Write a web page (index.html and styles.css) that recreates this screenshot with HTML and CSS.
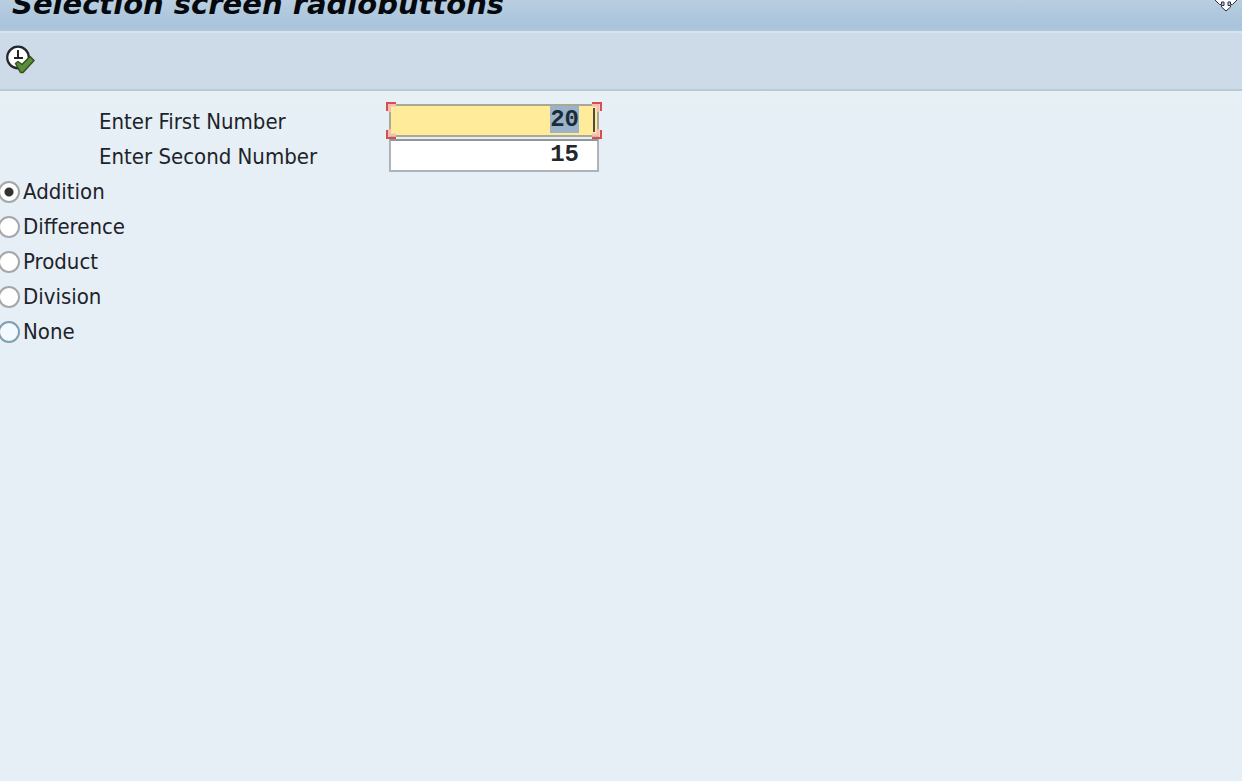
FILE: index.html
```html
<!DOCTYPE html>
<html lang="en">
<head>
<meta charset="utf-8">
<title>Selection screen radiobuttons</title>
<link rel="stylesheet" href="styles.css">
</head>
<body>
<header class="titlebar">
  <h1 class="title">Selection screen radiobuttons</h1>
  <svg class="move-cursor" width="24" height="24" viewBox="0 0 24 24" aria-hidden="true">
    <path d="M12 1 L16 5 V7 H14 V10 H17 V8 H19 L23 12 L18.500 16.500 H16.500 V14 H14 V17.500 H16.500 V19 L12 23 L7.500 19 V17.500 H10 V14 H7.500 V16.500 H5.500 L1 12 L5 8 H7 V10 H10 V7 H8 V5 Z" fill="#fff" stroke="#2c2c44" stroke-width="1"/>
  </svg>
</header>
<div class="toolbar">
  <button class="execute" type="button" aria-label="Execute">
    <svg width="30" height="30" viewBox="0 0 30 30" aria-hidden="true">
      <circle cx="13" cy="12.500" r="10.800" fill="#fff" stroke="#20262a" stroke-width="2.200"/>
      <path d="M13 5 V13.500 M9 13 H18" fill="none" stroke="#20262a" stroke-width="2"/>
      <path d="M10.500 18.500 L13 16.500 L17 19.500 L25 11.500 L29 15.500 L18 27.500 H15.500 Z" fill="#5c8c3e" stroke="#34511f" stroke-width="1.500" stroke-linejoin="round"/>
    </svg>
  </button>
</div>
<main class="screen">
  <form>
    <div class="row">
      <label class="label" for="first">Enter First Number</label>
      <div class="field focused">
        <input class="number" id="first" type="text" value="20">
        <span class="caret"></span>
        <svg class="marks" width="216" height="38" viewBox="0 0 216 38" aria-hidden="true">
          <g fill="none" stroke="#f8bcb8" stroke-width="3"><path d="M3.500 11 V4 H10 M206 4 H212 V11 M212 28 V34 H206 M10 34 H3.500 V28"/></g>
          <g fill="none" stroke="#d4504c" stroke-width="2"><path d="M1 10 V2 H10 M206 2 H215 V10 M215 29 V37 H206 M10 37 H1 V29"/></g>
        </svg>
      </div>
    </div>
    <div class="row">
      <label class="label" for="second">Enter Second Number</label>
      <div class="field"><input class="number" id="second" type="text" value="15"></div>
    </div>
    <div class="option"><input class="radio" type="radio" name="operation" id="addition" checked><label for="addition">Addition</label></div>
    <div class="option"><input class="radio" type="radio" name="operation" id="difference"><label for="difference">Difference</label></div>
    <div class="option"><input class="radio" type="radio" name="operation" id="product"><label for="product">Product</label></div>
    <div class="option"><input class="radio" type="radio" name="operation" id="division"><label for="division">Division</label></div>
    <div class="option"><input class="radio hot" type="radio" name="operation" id="none"><label for="none">None</label></div>
  </form>
</main>
<script src="script.js"></script>
</body>
</html>
```
FILE: styles.css
```css
* { box-sizing: border-box; }
body {
  margin: 0;
  min-height: 100vh;
  display: flex;
  flex-direction: column;
  background: #e7eff6;
  color: #1d2329;
  font-family: "DejaVu Sans Condensed", "Noto Sans", sans-serif;
  font-size: 22px;
}
.titlebar {
  position: relative;
  display: flex;
  align-items: flex-end;
  height: 31px;
  padding: 0 12px 10px;
  overflow: hidden;
  background: linear-gradient(#b9cfe0, #a9c3dc 80%, #aec7dc);
}
.title {
  margin: 0;
  color: #05090d;
  font: italic bold 29px/34px "DejaVu Sans", sans-serif;
  white-space: nowrap;
}
.move-cursor { position: absolute; top: -12px; right: 4px; }
.toolbar {
  display: flex;
  align-items: center;
  height: 60px;
  padding: 0 5px 2px;
  background: #ccdbe7;
  border-top: 2px solid #d8e5f0;
  border-bottom: 2px solid #b9c9d6;
}
.execute {
  display: flex;
  padding: 0;
  border: 0;
  background: none;
}
.screen {
  flex: 1;
  padding-top: 13px;
  background: linear-gradient(#e6f0f5, #e7eff6 60px, #e7eff6);
}
.row, .option {
  display: flex;
  align-items: center;
  height: 35px;
}
.row { padding-left: 99px; }
.label { width: 290px; }
.field {
  position: relative;
  align-self: flex-start;
  width: 210px;
  height: 33px;
}
.number {
  display: block;
  width: 100%;
  height: 100%;
  padding: 0 18px 2px 4px;
  border: 2px solid #b0b3b5;
  border-top-color: #909597;
  border-radius: 0;
  outline: 0;
  background: #fff;
  color: #25282a;
  font: bold 24px/26px "Liberation Mono", monospace;
  text-align: right;
  caret-color: transparent;
}
.number::selection { background: #9bb3c8; color: #1d2b38; }
.focused .number {
  background: #ffeb99;
  border-color: #a9a997;
}
.caret {
  position: absolute;
  top: 4px;
  right: 4px;
  width: 2px;
  height: 24px;
  background: #4c4c40;
}
.marks {
  position: absolute;
  top: -3px;
  left: -3px;
  pointer-events: none;
}
.radio {
  appearance: none;
  width: 22px;
  height: 22px;
  margin: 0 3px 0 -2px;
  border: 2px solid #a5a8aa;
  border-radius: 50%;
  background: #fff;
}
.radio:checked { background: radial-gradient(circle, #303336 4px, #fff 5px); }
.radio.hot { border-color: #829fb4; background: #f3faff; }
```
FILE: script.js
```js
const first = document.getElementById("first");
first.focus();
first.select();
```
